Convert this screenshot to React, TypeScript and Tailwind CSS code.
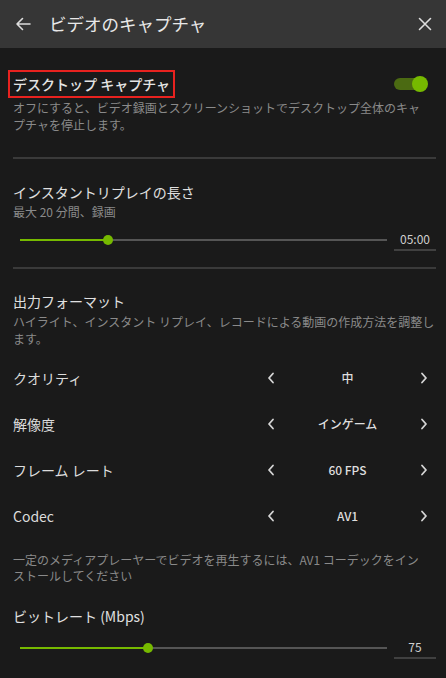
import React from "react";

const font = { fontFamily: '"Noto Sans CJK JP", "Noto Sans", sans-serif' };

function Chevron({ dir }: { dir: "left" | "right" }) {
  return (
    <svg width="8" height="12" viewBox="0 0 8 12" fill="none">
      {dir === "left" ? (
        <path d="M6 1.5 L2 6 L6 10.5" stroke="#d6d6d6" strokeWidth="1.8" strokeLinecap="round" strokeLinejoin="round" />
      ) : (
        <path d="M2 1.5 L6 6 L2 10.5" stroke="#d6d6d6" strokeWidth="1.8" strokeLinecap="round" strokeLinejoin="round" />
      )}
    </svg>
  );
}

function Slider({ pct, value }: { pct: number; value: string }) {
  return (
    <div className="flex items-center h-[20px]">
      <div className="flex-1 pl-[7px] pr-[7px]">
        <div className="relative h-[2px] bg-[#555555]">
          <div className="absolute left-0 top-0 h-[2px] bg-[#76b900]" style={{ width: `${pct}%` }} />
          <div
            className="absolute top-[-4px] w-[10px] h-[10px] rounded-full bg-[#76b900] -ml-[5px]"
            style={{ left: `${pct}%` }}
          />
        </div>
      </div>
      <div className="w-[42px] h-[22px] flex items-center justify-center border-b-2 border-[#404040] text-[12px] text-[#cfcfcf]">
        {value}
      </div>
    </div>
  );
}

function Row({ label, value }: { label: string; value: string }) {
  return (
    <div className="flex items-center h-[46px]">
      <div className="flex-1 text-[14px] text-[#dcdcdc]">{label}</div>
      <div className="flex items-center w-[169px] pr-[8px]">
        <Chevron dir="left" />
        <div className="flex-1 text-center text-[12px] font-medium text-[#dedede]">{value}</div>
        <Chevron dir="right" />
      </div>
    </div>
  );
}

export default function App() {
  return (
    <div className="w-[446px] h-[678px] bg-[#1a1a1a] overflow-hidden" style={font}>
      <div className="h-[48px] bg-[#363636] flex items-center pl-[15px] pr-[14px]">
        <svg width="16" height="14" viewBox="0 0 16 14" fill="none">
          <path d="M15 7 H2 M7.5 1.5 L2 7 L7.5 12.5" stroke="#dddddd" strokeWidth="1.6" strokeLinecap="round" strokeLinejoin="round" />
        </svg>
        <div className="ml-[18px] flex-1 text-[17.5px] text-[#e8e8e8] leading-none">ビデオのキャプチャ</div>
        <svg width="14" height="14" viewBox="0 0 14 14" fill="none">
          <path d="M1.5 1.5 L12.5 12.5 M12.5 1.5 L1.5 12.5" stroke="#dddddd" strokeWidth="1.6" strokeLinecap="round" />
        </svg>
      </div>

      <div className="pl-[13px] pr-[10px]">
        <div className="pt-[22px] flex items-center justify-between">
          <span className="-ml-[5px] inline-block border-2 border-[#e8221f] px-[3px] py-[3px] text-[14px] leading-[18px] text-[#e4e4e4] font-medium">
            デスクトップ キャプチャ
          </span>
          <div className="relative w-[34px] h-[18px] mr-[8px] flex items-center">
            <div className="w-[32px] h-[12px] rounded-full bg-[#4b6a12]" />
            <div className="absolute right-0 top-[1px] w-[16px] h-[16px] rounded-full bg-[#76b900]" />
          </div>
        </div>
        <div className="mt-[1px] pr-[8px] text-[12px] leading-[17px] text-[#8a8a8a]">
          オフにすると、ビデオ録画とスクリーンショットでデスクトップ全体のキャプチャを停止します。
        </div>
        <div className="mt-[24px] h-[2px] bg-[#3a3a3a]" />

        <div className="mt-[23px] text-[14px] leading-[20px] text-[#e0e0e0]">インスタントリプレイの長さ</div>
        <div className="mt-[2px] text-[12px] leading-[16px] text-[#8a8a8a]">最大 20 分間、録画</div>
        <div className="mt-[10px]">
          <Slider pct={24} value="05:00" />
        </div>
        <div className="mt-[17px] h-[2px] bg-[#3a3a3a]" />

        <div className="mt-[22px] text-[14px] leading-[20px] text-[#e0e0e0]">出力フォーマット</div>
        <div className="mt-[2px] text-[12px] leading-[17px] text-[#8a8a8a]">
          ハイライト、インスタント リプレイ、レコードによる動画の作成方法を調整します。
        </div>
        <div className="mt-[8px]">
          <Row label="クオリティ" value="中" />
          <Row label="解像度" value="インゲーム" />
          <Row label="フレーム レート" value="60 FPS" />
          <Row label="Codec" value="AV1" />
        </div>
        <div className="mt-[13px] pr-[15px] text-[12px] leading-[16px] text-[#8a8a8a]">
          一定のメディアプレーヤーでビデオを再生するには、AV1 コーデックをインストールしてください
        </div>
        <div className="mt-[22px] text-[14px] leading-[20px] text-[#e0e0e0]">ビットレート (Mbps)</div>
        <div className="mt-[12px]">
          <Slider pct={35} value="75" />
        </div>
      </div>
    </div>
  );
}
